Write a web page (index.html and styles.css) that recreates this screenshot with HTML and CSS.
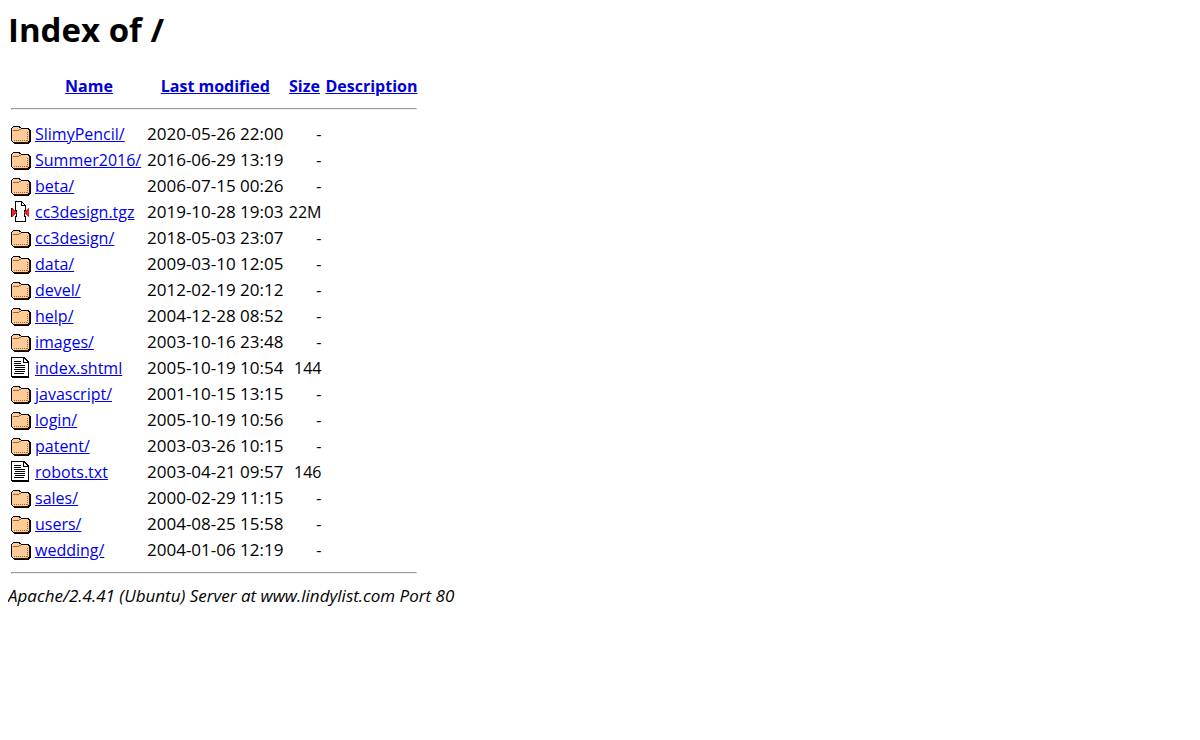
FILE: index.html
```html
<!DOCTYPE html>
<html lang="en">
<head>
  <meta charset="UTF-8">
  <meta name="viewport" content="width=device-width, initial-scale=1.0">
  <title>Index of /</title>
  <link rel="stylesheet" href="styles.css">
</head>
<body>
  <!-- icon set -->
  <svg class="sprite" aria-hidden="true">
    <symbol id="folder" viewBox="0 0 20 22">
      <path fill="#000" d="M2 3h7v1h1v1h8v1h1v1h1v12h-1v1h-1v1H3v-1H2v-1H1v-1H0V5h1V4h1z"/>
      <path fill="#fc9" d="M2 4h6v1h2v1h7v1h1v11h-1v1H2v-1H1V5h1z"/>
      <path fill="none" stroke="#963" d="M2 7.500h6M8 6.500h2"/>
      <path fill="none" stroke="#963" stroke-dasharray="1 1" d="M3 17.500h14M16.500 9v9"/>
      <path fill="none" stroke="#310" d="M18.500 8v10M3 19.500h15"/>
    </symbol>
    <symbol id="archive" viewBox="0 0 20 22">
      <path fill="#000" d="M4 0h7v1h1v1h1v1h1v1h1v6h-1v5h1v6H4v-6h1v-5H4z"/>
      <path fill="#fff" d="M5 1h5v4h4v4h-1v7h1v4H5v-4h1V9H5z"/>
      <path fill="#fff" d="M11 2h1v1h1v1h-2z"/>
      <path fill="#e22" d="M0 7h2v1h1v1h1v1h1v1h1v1H5v1H4v1H3v1H2v1H0z"/>
      <path fill="#e22" d="M18 7h-1v1h-1v1h-1v1h-1v1h-1v1h1v1h1v1h1v1h1v1h1z"/>
      <path fill="#300" d="M0 7h1v9H0z"/>
    </symbol>
    <symbol id="text" viewBox="0 0 20 22">
      <path fill="#000" d="M0 0h13l5 5v16H1v-1H0z"/>
      <path fill="#fff" d="M1 1h11v5h5v13H1z"/>
      <path fill="#fff" d="M13 2l3 3h-3z"/>
      <path fill="none" stroke="#000" d="M3 4.500h7M3 6.500h7M3 8.500h11M4 10.500h10M3 12.500h11M4 14.500h10M3 16.500h10"/>
    </symbol>
  </svg>

  <h1>Index of /</h1>
  <table>
    <colgroup>
      <col class="col-icon"><col class="col-name"><col class="col-date"><col class="col-size"><col class="col-desc">
    </colgroup>
    <tr><th><svg class="icon"></svg></th><th><a href="?C=N;O=D">Name</a></th><th><a href="?C=M;O=A">Last modified</a></th><th><a href="?C=S;O=A">Size</a></th><th><a href="?C=D;O=A">Description</a></th></tr>
    <tr><th colspan="5"><hr></th></tr>
    <tr><td><svg class="icon"><use href="#folder"/></svg></td><td><a href="SlimyPencil/">SlimyPencil/</a></td><td class="date">2020-05-26 22:00</td><td class="size">-</td><td></td></tr>
    <tr><td><svg class="icon"><use href="#folder"/></svg></td><td><a href="Summer2016/">Summer2016/</a></td><td class="date">2016-06-29 13:19</td><td class="size">-</td><td></td></tr>
    <tr><td><svg class="icon"><use href="#folder"/></svg></td><td><a href="beta/">beta/</a></td><td class="date">2006-07-15 00:26</td><td class="size">-</td><td></td></tr>
    <tr><td><svg class="icon"><use href="#archive"/></svg></td><td><a href="cc3design.tgz">cc3design.tgz</a></td><td class="date">2019-10-28 19:03</td><td class="size">22M</td><td></td></tr>
    <tr><td><svg class="icon"><use href="#folder"/></svg></td><td><a href="cc3design/">cc3design/</a></td><td class="date">2018-05-03 23:07</td><td class="size">-</td><td></td></tr>
    <tr><td><svg class="icon"><use href="#folder"/></svg></td><td><a href="data/">data/</a></td><td class="date">2009-03-10 12:05</td><td class="size">-</td><td></td></tr>
    <tr><td><svg class="icon"><use href="#folder"/></svg></td><td><a href="devel/">devel/</a></td><td class="date">2012-02-19 20:12</td><td class="size">-</td><td></td></tr>
    <tr><td><svg class="icon"><use href="#folder"/></svg></td><td><a href="help/">help/</a></td><td class="date">2004-12-28 08:52</td><td class="size">-</td><td></td></tr>
    <tr><td><svg class="icon"><use href="#folder"/></svg></td><td><a href="images/">images/</a></td><td class="date">2003-10-16 23:48</td><td class="size">-</td><td></td></tr>
    <tr><td><svg class="icon"><use href="#text"/></svg></td><td><a href="index.shtml">index.shtml</a></td><td class="date">2005-10-19 10:54</td><td class="size">144</td><td></td></tr>
    <tr><td><svg class="icon"><use href="#folder"/></svg></td><td><a href="javascript/">javascript/</a></td><td class="date">2001-10-15 13:15</td><td class="size">-</td><td></td></tr>
    <tr><td><svg class="icon"><use href="#folder"/></svg></td><td><a href="login/">login/</a></td><td class="date">2005-10-19 10:56</td><td class="size">-</td><td></td></tr>
    <tr><td><svg class="icon"><use href="#folder"/></svg></td><td><a href="patent/">patent/</a></td><td class="date">2003-03-26 10:15</td><td class="size">-</td><td></td></tr>
    <tr><td><svg class="icon"><use href="#text"/></svg></td><td><a href="robots.txt">robots.txt</a></td><td class="date">2003-04-21 09:57</td><td class="size">146</td><td></td></tr>
    <tr><td><svg class="icon"><use href="#folder"/></svg></td><td><a href="sales/">sales/</a></td><td class="date">2000-02-29 11:15</td><td class="size">-</td><td></td></tr>
    <tr><td><svg class="icon"><use href="#folder"/></svg></td><td><a href="users/">users/</a></td><td class="date">2004-08-25 15:58</td><td class="size">-</td><td></td></tr>
    <tr><td><svg class="icon"><use href="#folder"/></svg></td><td><a href="wedding/">wedding/</a></td><td class="date">2004-01-06 12:19</td><td class="size">-</td><td></td></tr>
    <tr><th colspan="5"><hr></th></tr>
  </table>
  <address>Apache/2.4.41 (Ubuntu) Server at www.lindylist.com Port 80</address>
</body>
</html>
```
FILE: styles.css
```css
body {
  margin: 8px;
  background: #fff;
  color: #000;
  font-family: "Open Sans", "Noto Sans", sans-serif;
  font-size: 16px;
  line-height: 22px;
}
h1 {
  margin: 0 0 20px;
  font-size: 33px;
  line-height: 44px;
}
a { color: #0000ee; }
th a { color: #0000d8; }

/* file listing */
table { border-spacing: 2px; }
th, td {
  padding: 1px;
  white-space: nowrap;
}
td { text-align: left; }
.date { font-size: 17px; }
.size { text-align: right; }
.col-icon { width: 22px; }
.col-name { width: 110px; }
.col-date { width: 137px; }
.col-size { width: 36px; }
.col-desc { width: 94px; }
hr { margin: 7px 0 9px; }

address {
  font-size: 17px;
  line-height: 20px;
}

.sprite { display: none; }
.icon {
  display: block;
  width: 20px;
  height: 22px;
  shape-rendering: crispEdges;
}
```
